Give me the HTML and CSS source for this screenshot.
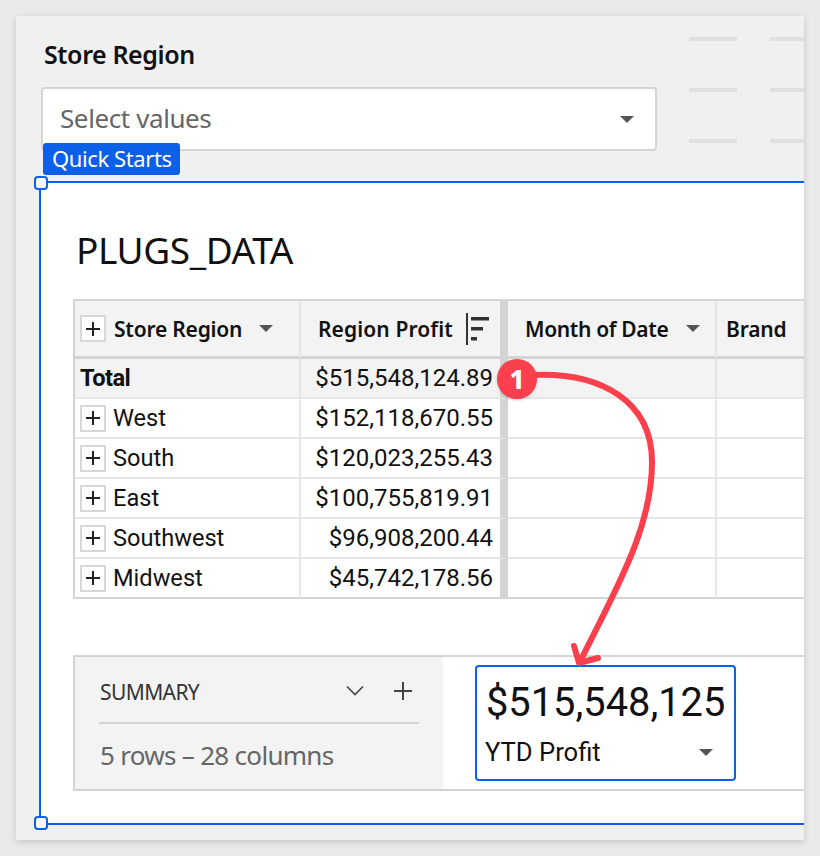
FILE: index.html
```html
<!DOCTYPE html>
<html lang="en">
<head>
    <meta charset="UTF-8">
    <meta name="viewport" content="width=device-width, initial-scale=1.0">
    <title>PLUGS_DATA</title>
    <link rel="stylesheet" href="styles.css">
</head>
<body>
    <div class="card">
        <div class="filter-row">
            <div class="filter">
                <div class="filter-label">Store Region</div>
                <div class="select">
                    <span class="select-text">Select values</span>
                    <i class="caret caret-select"></i>
                </div>
            </div>
            <div class="marks">
                <i></i><i></i><i></i><i></i><i></i><i></i>
            </div>
        </div>

        <div class="frame">
            <span class="tag">Quick Starts</span>
            <span class="handle handle-top"></span>
            <span class="handle handle-bottom"></span>

            <h1>PLUGS_DATA</h1>

            <table class="grid">
                <colgroup>
                    <col class="col-region">
                    <col class="col-profit">
                    <col class="col-month">
                    <col class="col-brand">
                </colgroup>
                <thead>
                    <tr>
                        <th>
                            <div class="cell-region">
                                <span class="expand"></span>
                                <span class="th-text">Store Region</span>
                                <i class="caret caret-th"></i>
                            </div>
                        </th>
                        <th class="freeze">
                            <div class="cell-profit">
                                <span class="th-text">Region Profit</span>
                                <svg class="sort-icon" width="26" height="32" viewBox="0 0 26 32">
                                    <rect x="0" y="0" width="2" height="32" fill="#333"/>
                                    <rect x="5" y="4" width="18" height="3.5" fill="#333"/>
                                    <rect x="5" y="14" width="12" height="3.5" fill="#333"/>
                                    <rect x="5" y="24" width="6" height="3.5" fill="#333"/>
                                </svg>
                            </div>
                        </th>
                        <th>
                            <div class="cell-month">
                                <span class="th-text">Month of Date</span>
                                <i class="caret caret-th"></i>
                            </div>
                        </th>
                        <th>
                            <div class="cell-brand">
                                <span class="th-text">Brand</span>
                            </div>
                        </th>
                    </tr>
                </thead>
                <tbody>
                    <tr class="total">
                        <td class="total-label">Total</td>
                        <td class="num freeze">$515,548,124.89</td>
                        <td></td>
                        <td></td>
                    </tr>
                    <tr>
                        <td><div class="cell-region"><span class="expand"></span>West</div></td>
                        <td class="num freeze">$152,118,670.55</td>
                        <td></td>
                        <td></td>
                    </tr>
                    <tr>
                        <td><div class="cell-region"><span class="expand"></span>South</div></td>
                        <td class="num freeze">$120,023,255.43</td>
                        <td></td>
                        <td></td>
                    </tr>
                    <tr>
                        <td><div class="cell-region"><span class="expand"></span>East</div></td>
                        <td class="num freeze">$100,755,819.91</td>
                        <td></td>
                        <td></td>
                    </tr>
                    <tr>
                        <td><div class="cell-region"><span class="expand"></span>Southwest</div></td>
                        <td class="num freeze">$96,908,200.44</td>
                        <td></td>
                        <td></td>
                    </tr>
                    <tr>
                        <td><div class="cell-region"><span class="expand"></span>Midwest</div></td>
                        <td class="num freeze">$45,742,178.56</td>
                        <td></td>
                        <td></td>
                    </tr>
                </tbody>
            </table>

            <div class="summary">
                <div class="summary-panel">
                    <div class="summary-head">
                        <span class="summary-title">SUMMARY</span>
                        <svg class="chevron" width="18" height="11" viewBox="0 0 18 11">
                            <path d="M1 1.5 L9 9.5 L17 1.5" fill="none" stroke="#444" stroke-width="1.6"/>
                        </svg>
                        <svg class="plus" width="18" height="18" viewBox="0 0 18 18">
                            <path d="M9 0 V18 M0 9 H18" fill="none" stroke="#444" stroke-width="2"/>
                        </svg>
                    </div>
                    <div class="summary-count">5 rows – 28 columns</div>
                </div>
                <div class="kpi">
                    <div class="kpi-value">$515,548,125</div>
                    <div class="kpi-foot">
                        <span>YTD Profit</span>
                        <i class="caret caret-kpi"></i>
                    </div>
                </div>
            </div>
        </div>
    </div>

    <!-- callout drawn over the page -->
    <svg class="callout" width="820" height="856" viewBox="0 0 820 856">
        <path d="M530 375 C602 371 652 402 652 462 C652 530 614 592 580 662" fill="none" stroke="#fb3f4d" stroke-width="6"/>
        <path d="M574 646 L579 663 L598 658" fill="none" stroke="#fb3f4d" stroke-width="6" stroke-linecap="round" stroke-linejoin="round"/>
    </svg>
    <div class="badge">1</div>
</body>
</html>
```

FILE: styles.css
```css
body {
    font-family: "Noto Sans", sans-serif;
    margin: 0;
    padding: 16px;
    background-color: #e9e9e9;
    height: 824px;
    overflow: hidden;
    color: #111;
}
.card {
    width: 788px;
    height: 824px;
    background-color: #f0f0f0;
    box-shadow: 0 2px 6px rgba(0,0,0,0.15);
    overflow: hidden;
}
.filter-row {
    display: flex;
    height: 165px;
}
.filter {
    flex: none;
    margin-left: 25px;
    width: 616px;
}
.filter-label {
    margin: 21px 0 0 3px;
    height: 50px;
    font-size: 25px;
    font-weight: 600;
    line-height: 34px;
    letter-spacing: -0.4px;
}
.select {
    display: flex;
    align-items: center;
    justify-content: space-between;
    box-sizing: border-box;
    height: 64px;
    padding: 0 21px 0 17px;
    background-color: white;
    border: 2px solid #d4d4d4;
    border-radius: 4px;
    font-size: 26px;
    letter-spacing: -0.4px;
    color: #666;
}
.select-text {
    padding-bottom: 3px;
}
.caret {
    display: block;
    width: 0;
    height: 0;
    border-left: 7px solid transparent;
    border-right: 7px solid transparent;
    border-top: 7px solid #555;
}
.marks {
    flex: none;
    display: grid;
    grid-template-columns: 48px 48px;
    gap: 47px 33px;
    align-self: flex-start;
    margin: 21px 0 0 32px;
}
.marks i {
    display: block;
    height: 4px;
    background-color: #e0e0e0;
}
.frame {
    position: relative;
    box-sizing: border-box;
    margin-left: 23px;
    height: 644px;
    padding-left: 32px;
    background-color: white;
    border-top: 2px solid #0b5fe8;
    border-bottom: 2px solid #0b5fe8;
    border-left: 2px solid #0b5fe8;
}
.tag {
    position: absolute;
    top: -40px;
    left: 2px;
    height: 32px;
    padding: 0 8px 0 9px;
    background-color: #0b5fe8;
    color: white;
    border-radius: 3px;
    font-size: 22px;
    line-height: 31px;
    letter-spacing: -0.4px;
}
.handle {
    position: absolute;
    left: -7px;
    width: 10px;
    height: 10px;
    background-color: white;
    border: 2px solid #0b5fe8;
    border-radius: 4px;
}
.handle-top {
    top: -7px;
}
.handle-bottom {
    bottom: -7px;
}
h1 {
    margin: 0;
    padding: 42px 0 0 3px;
    height: 116px;
    box-sizing: border-box;
    font-size: 37px;
    font-weight: 400;
    line-height: 50px;
    letter-spacing: -0.4px;
}
.grid {
    table-layout: fixed;
    width: 900px;
    border-collapse: separate;
    border-spacing: 0;
    border-top: 2px solid #d4d4d4;
    border-left: 2px solid #d4d4d4;
    font-family: Roboto, sans-serif;
    font-size: 23.6px;
}
.col-region {
    width: 226px;
}
.col-profit {
    width: 207px;
}
.col-month {
    width: 209px;
}
.col-brand {
    width: 258px;
}
th {
    height: 55px;
    padding: 0;
    background-color: #f3f3f3;
    border-bottom: 3px solid #d4d4d4;
    border-right: 2px solid #e6e6e6;
    font-family: "Noto Sans", sans-serif;
    font-size: 21px;
    font-weight: 600;
    text-align: left;
}
td {
    height: 38px;
    padding: 0;
    border-bottom: 2px solid #e6e6e6;
    border-right: 2px solid #e6e6e6;
}
th.freeze, td.freeze {
    border-right: 8px solid #d4d4d4;
}
tbody tr:last-child td {
    border-bottom-color: #d4d4d4;
}
.total td {
    background-color: #f3f3f3;
}
.total td.total-label {
    padding-left: 5px;
    font-weight: 700;
    letter-spacing: -0.5px;
}
.num {
    padding-right: 7px;
    font-size: 24px;
    text-align: right;
}
.cell-region, .cell-profit, .cell-month, .cell-brand {
    display: flex;
    align-items: center;
}
.cell-region {
    padding-left: 5px;
}
.cell-profit {
    padding-left: 17px;
}
.cell-month {
    padding-left: 17px;
}
.cell-brand {
    padding-left: 9px;
}
.th-text {
    letter-spacing: -0.2px;
    white-space: nowrap;
}
.cell-region .th-text {
    padding-left: 1px;
}
.cell-profit .th-text {
    letter-spacing: 0.1px;
}
.cell-month .th-text {
    letter-spacing: -0.35px;
}
.expand {
    position: relative;
    flex: none;
    box-sizing: border-box;
    width: 26px;
    height: 27px;
    margin-right: 7px;
    background-color: white;
    border: 2px solid #d8d8d8;
}
.expand::before, .expand::after {
    content: "";
    position: absolute;
    background-color: #222;
}
.expand::before {
    left: 4px;
    top: 10.5px;
    width: 14px;
    height: 2px;
}
.expand::after {
    left: 10px;
    top: 4.5px;
    width: 2px;
    height: 14px;
}
.caret-th {
    margin-left: 17px;
}
.cell-month .caret-th {
    margin-left: 18px;
}
.sort-icon {
    flex: none;
    margin-left: 13px;
}
.summary {
    display: flex;
    align-items: center;
    box-sizing: border-box;
    width: 900px;
    height: 136px;
    margin-top: 56px;
    background-color: white;
    border: 2px solid #d4d4d4;
}
.summary-panel {
    box-sizing: border-box;
    width: 368px;
    height: 132px;
    padding: 0 24px;
    background-color: #f3f3f3;
}
.summary-head {
    display: flex;
    align-items: center;
    height: 65px;
    border-bottom: 2px solid #d4d4d4;
}
.summary-title {
    flex: 1;
    padding: 4px 0 0 1px;
    font-size: 21px;
    letter-spacing: -0.6px;
    color: #333;
}
.chevron {
    margin-top: 2px;
}
.plus {
    margin: 2px 7px 0 30px;
}
.summary-count {
    padding: 13px 0 0 1px;
    font-size: 26px;
    letter-spacing: -0.7px;
    color: #666;
}
.kpi {
    box-sizing: border-box;
    width: 261px;
    height: 116px;
    margin-left: 32px;
    padding-left: 8px;
    border: 2px solid #0b5fe8;
    border-radius: 4px;
    font-family: Roboto, sans-serif;
}
.kpi-value {
    padding: 9px 0 4px 1px;
    font-size: 39.8px;
    line-height: 54px;
}
.kpi-foot {
    display: flex;
    align-items: center;
    justify-content: space-between;
    padding-right: 21px;
    font-size: 25.6px;
    line-height: 36px;
}
.callout {
    position: absolute;
    top: 0;
    left: 0;
}
.badge {
    position: absolute;
    left: 497px;
    top: 359px;
    width: 40px;
    height: 40px;
    background-color: #fb3f4d;
    border-radius: 50%;
    box-shadow: 0 1px 3px rgba(0,0,0,0.2);
    color: white;
    font-size: 26px;
    font-weight: 800;
    line-height: 40px;
    text-align: center;
}
```
